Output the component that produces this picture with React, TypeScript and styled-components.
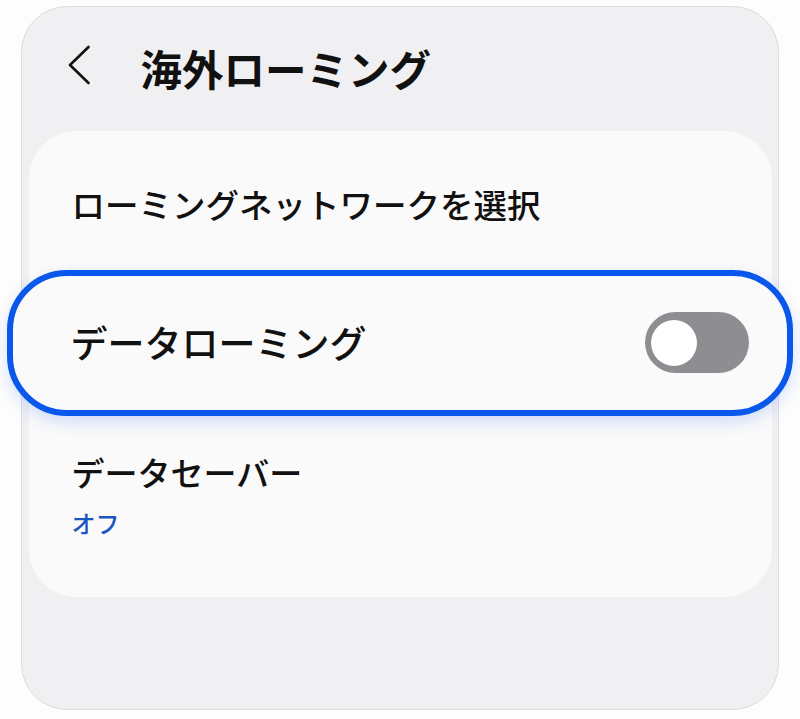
import React from "react";
import styled, { createGlobalStyle } from "styled-components";

const GlobalStyle = createGlobalStyle`
  html, body {
    margin: 0;
    padding: 0;
    background: #fdfdfd;
  }
  body {
    font-family: "Noto Sans CJK JP", "Noto Sans", sans-serif;
    color: #111111;
  }
`;

const Phone = styled.div`
  box-sizing: border-box;
  margin: 6px 21px 0 21px;
  height: 704px;
  border: 1.5px solid #dcdcdf;
  border-radius: 46px;
  background: #f0f0f2;
  padding: 0 6.5px;
`;

const Header = styled.header`
  height: 123.5px;
  display: flex;
  align-items: center;
  padding-left: 38px;
  gap: 50px;
`;

const BackButton = styled.button`
  border: none;
  background: none;
  padding: 0;
  margin: 0 0 7px 0;
  display: flex;
  cursor: pointer;
`;

const Title = styled.h1`
  margin: 0;
  font-size: 41.5px;
  font-weight: 700;
  line-height: 1.2;
  letter-spacing: 0;
`;

const Card = styled.section`
  background: #fafafa;
  border-radius: 48px;
  height: 466px;
  display: flex;
  flex-direction: column;
`;

const PlainRow = styled.div`
  height: 139px;
  box-sizing: border-box;
  padding: 9px 0 0 43px;
  display: flex;
  align-items: center;
`;

const FocusRow = styled.div`
  box-sizing: border-box;
  height: 146px;
  margin: 0 -21px 0 -22px;
  border: 6px solid #0a57eb;
  border-radius: 60px;
  background: #fafafa;
  box-shadow: 0 6px 16px rgba(20, 90, 240, 0.18);
  display: flex;
  align-items: center;
  justify-content: space-between;
  padding: 0 38px 0 58px;
`;

const StackRow = styled.div`
  flex: 1;
  box-sizing: border-box;
  padding: 37px 0 0 43px;
  display: flex;
  flex-direction: column;
  gap: 17px;
`;

const Label = styled.span<{ $size?: number }>`
  font-size: ${(p) => p.$size ?? 33.5}px;
  line-height: 1.2;
  font-weight: 500;
  color: #111111;
`;

const SubLabel = styled.span`
  font-size: 24px;
  line-height: 1.2;
  font-weight: 500;
  color: #1b55c2;
`;

const Track = styled.div<{ $on: boolean }>`
  width: 104px;
  height: 61px;
  border-radius: 31px;
  background: ${(p) => (p.$on ? "#0a57eb" : "#8e8e92")};
  display: flex;
  align-items: center;
  justify-content: ${(p) => (p.$on ? "flex-end" : "flex-start")};
  padding: 0 6px;
  box-sizing: border-box;
`;

const Knob = styled.div`
  width: 46px;
  height: 46px;
  border-radius: 50%;
  background: #ffffff;
`;

const Toggle = ({ on }: { on: boolean }): JSX.Element => (
  <Track $on={on}>
    <Knob />
  </Track>
);

const App = (): JSX.Element => {
  const [roaming, setRoaming] = React.useState(false);

  return (
    <React.Fragment>
      <GlobalStyle />
      <Phone>
        <Header>
          <BackButton aria-label="戻る">
            <svg width="24" height="40" viewBox="0 0 24 40">
              <path d="M21.5 2 L3 20 L21.5 38" fill="none" stroke="#111" strokeWidth="2.6" strokeLinecap="round" strokeLinejoin="round" />
            </svg>
          </BackButton>
          <Title>海外ローミング</Title>
        </Header>
        <Card>
          <PlainRow>
            <Label>ローミングネットワークを選択</Label>
          </PlainRow>
          <FocusRow onClick={() => setRoaming((v) => !v)}>
            <Label $size={37}>データローミング</Label>
            <Toggle on={roaming} />
          </FocusRow>
          <StackRow>
            <Label $size={33}>データセーバー</Label>
            <SubLabel>オフ</SubLabel>
          </StackRow>
        </Card>
      </Phone>
    </React.Fragment>
  );
};

export default App;
